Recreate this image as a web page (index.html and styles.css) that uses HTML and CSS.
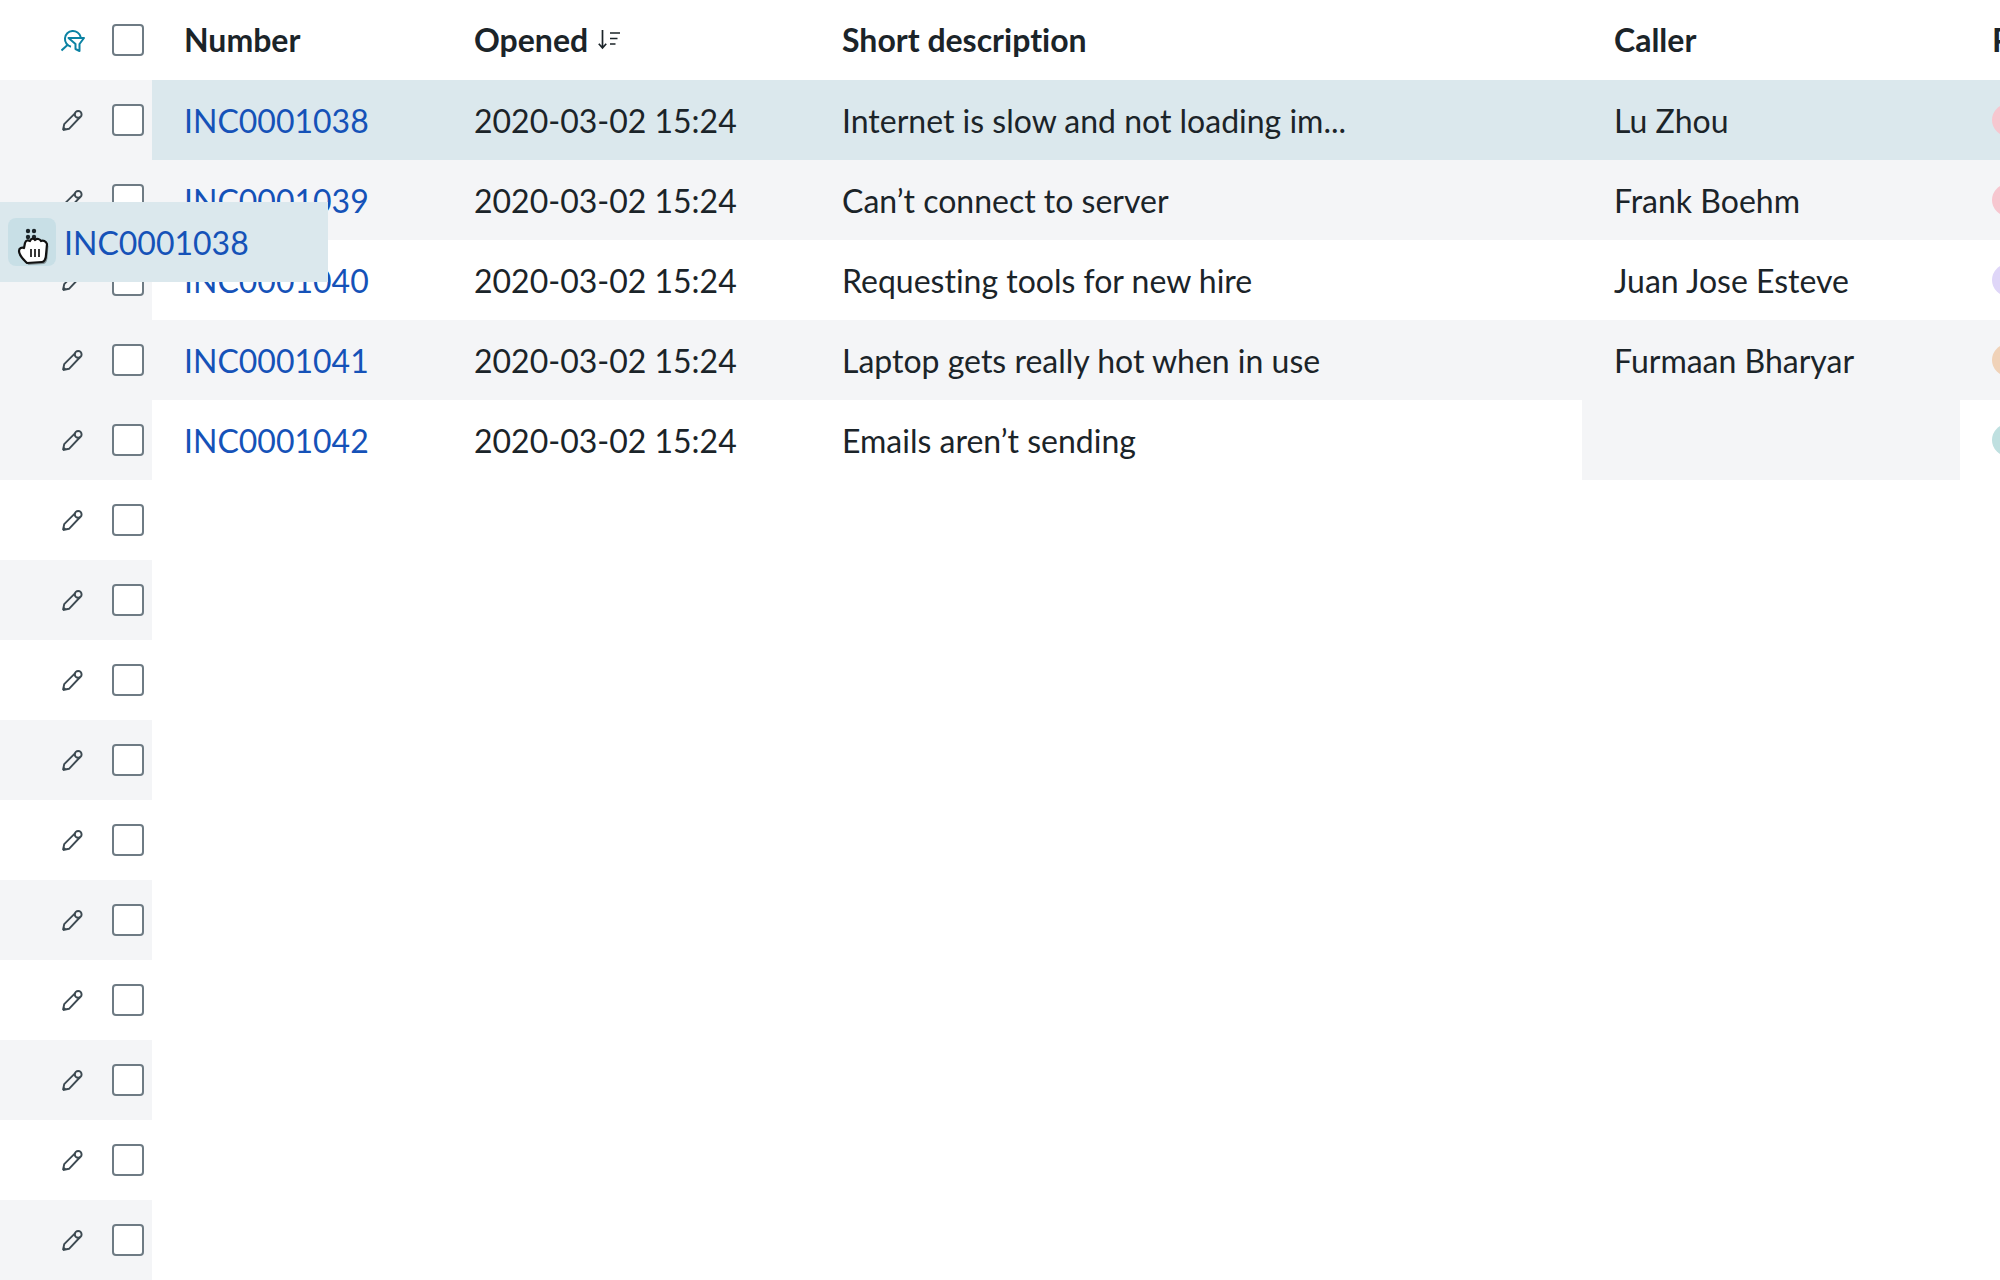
FILE: index.html
```html
<!DOCTYPE html>
<html lang="en">
<head>
    <meta charset="UTF-8">
    <meta name="viewport" content="width=device-width, initial-scale=1.0">
    <title>Incidents</title>
    <link rel="stylesheet" href="styles.css">
</head>
<body>

    <svg class="defs" width="0" height="0">
        <symbol id="pencil" viewBox="0 0 24 24">
            <path d="M2 22l1.200-5.800L14.200 5.200M19.200 9L8 20.800 2 22" fill="none" stroke="currentColor" stroke-width="1.900" stroke-linejoin="round"/>
            <circle cx="17.200" cy="6.400" r="3.400" fill="none" stroke="currentColor" stroke-width="1.900"/>
            <path d="M1.600 22.400l1-4 3 2.900z" fill="currentColor"/>
        </symbol>
    </svg>

    <div class="lista">
        <div class="fila cabecera">
            <div class="gutter">
                <svg class="icono-filtro" width="24" height="24" viewBox="0 0 24 24">
                    <path d="M19.700 9A8 8 0 1 0 10 18.700" fill="none" stroke="currentColor" stroke-width="2"/>
                    <path d="M7 16.500l-6.500 6" fill="none" stroke="currentColor" stroke-width="2"/>
                    <path d="M7.500 10H23l-4.500 6v7l-4-2v-5z" fill="#fff" stroke="currentColor" stroke-width="2" stroke-linejoin="round"/>
                </svg>
                <span class="check"></span>
            </div>
            <div class="celda">Number</div>
            <div class="celda">Opened
                <svg class="icono-orden" width="24" height="20" viewBox="0 0 24 20">
                    <path d="M4.500 0v18M0.800 13.800l3.700 4.200 3.700-4.200" fill="none" stroke="currentColor" stroke-width="1.700"/>
                    <path d="M12 3h10M12 8.500h7.500M12 14h5.500" fill="none" stroke="currentColor" stroke-width="1.700"/>
                </svg>
            </div>
            <div class="celda">Short description</div>
            <div class="celda">Caller</div>
            <div class="celda">Priority</div>
        </div>

        <div class="fila seleccionada">
            <div class="gutter"><svg class="lapiz"><use href="#pencil"/></svg><span class="check"></span></div>
            <div class="celda"><a href="#">INC0001038</a></div>
            <div class="celda">2020-03-02 15:24</div>
            <div class="celda">Internet is slow and not loading im...</div>
            <div class="celda">Lu Zhou</div>
            <div class="celda"><span class="punto rosa"></span></div>
        </div>
        <div class="fila gris">
            <div class="gutter"><svg class="lapiz"><use href="#pencil"/></svg><span class="check"></span></div>
            <div class="celda"><a href="#">INC0001039</a></div>
            <div class="celda">2020-03-02 15:24</div>
            <div class="celda">Can’t connect to server</div>
            <div class="celda">Frank Boehm</div>
            <div class="celda"><span class="punto rosa"></span></div>
        </div>
        <div class="fila">
            <div class="gutter"><svg class="lapiz"><use href="#pencil"/></svg><span class="check"></span></div>
            <div class="celda"><a href="#">INC0001040</a></div>
            <div class="celda">2020-03-02 15:24</div>
            <div class="celda">Requesting tools for new hire</div>
            <div class="celda">Juan Jose Esteve</div>
            <div class="celda"><span class="punto lila"></span></div>
        </div>
        <div class="fila gris">
            <div class="gutter"><svg class="lapiz"><use href="#pencil"/></svg><span class="check"></span></div>
            <div class="celda"><a href="#">INC0001041</a></div>
            <div class="celda">2020-03-02 15:24</div>
            <div class="celda">Laptop gets really hot when in use</div>
            <div class="celda">Furmaan Bharyar</div>
            <div class="celda"><span class="punto naranja"></span></div>
        </div>
        <div class="fila">
            <div class="gutter"><svg class="lapiz"><use href="#pencil"/></svg><span class="check"></span></div>
            <div class="celda"><a href="#">INC0001042</a></div>
            <div class="celda">2020-03-02 15:24</div>
            <div class="celda">Emails aren’t sending</div>
            <div class="celda vacia"></div>
            <div class="celda"><span class="punto turquesa"></span></div>
        </div>

        <div class="fila"><div class="gutter"><svg class="lapiz"><use href="#pencil"/></svg><span class="check"></span></div></div>
        <div class="fila"><div class="gutter"><svg class="lapiz"><use href="#pencil"/></svg><span class="check"></span></div></div>
        <div class="fila"><div class="gutter"><svg class="lapiz"><use href="#pencil"/></svg><span class="check"></span></div></div>
        <div class="fila"><div class="gutter"><svg class="lapiz"><use href="#pencil"/></svg><span class="check"></span></div></div>
        <div class="fila"><div class="gutter"><svg class="lapiz"><use href="#pencil"/></svg><span class="check"></span></div></div>
        <div class="fila"><div class="gutter"><svg class="lapiz"><use href="#pencil"/></svg><span class="check"></span></div></div>
        <div class="fila"><div class="gutter"><svg class="lapiz"><use href="#pencil"/></svg><span class="check"></span></div></div>
        <div class="fila"><div class="gutter"><svg class="lapiz"><use href="#pencil"/></svg><span class="check"></span></div></div>
        <div class="fila"><div class="gutter"><svg class="lapiz"><use href="#pencil"/></svg><span class="check"></span></div></div>
        <div class="fila"><div class="gutter"><svg class="lapiz"><use href="#pencil"/></svg><span class="check"></span></div></div>
    </div>

    <!-- Fila que se esta arrastrando -->
    <div class="arrastre">
        <div class="asa">
            <svg width="48" height="48" viewBox="0 0 48 48">
                <g fill="#1b2429">
                    <circle cx="20" cy="13" r="2.200"/>
                    <circle cx="26" cy="13" r="2.200"/>
                    <circle cx="20" cy="19" r="2.200"/>
                    <circle cx="26" cy="19" r="2.200"/>
                </g>
                <path d="M19 45C16 42 11 38 11 33c0-3 3-4 5-3l1-5c1-3 3-3 5-2 1-3 4-3 5-1 2-2 5-1 6 1 2-1 5 0 6 3l-1 11c0 4-2 7-4 7z" fill="#000" opacity="0.350" transform="translate(1.500 2)"/>
                <path d="M19 45C16 42 11 38 11 33c0-3 3-4 5-3l1-5c1-3 3-3 5-2 1-3 4-3 5-1 2-2 5-1 6 1 2-1 5 0 6 3l-1 11c0 4-2 7-4 7z" fill="#fff" stroke="#111" stroke-width="2.200" stroke-linejoin="round"/>
                <path d="M23 31v8M27 31v8M31 31v8" stroke="#222" stroke-width="1.800" fill="none"/>
            </svg>
        </div>
        <a href="#">INC0001038</a>
    </div>

</body>
</html>
```

FILE: styles.css
```css
body {
    margin: 0;
    height: 1280px;
    overflow: hidden;
    background: #fff;
    font-family: Lato, Arial, sans-serif;
    font-size: 32px;
    font-variant-ligatures: none;
    color: #1b2429;
}

a {
    color: #1552b8;
    text-decoration: none;
}

.defs {
    position: absolute;
}

.lista {
    width: 2000px;
}

.fila {
    display: grid;
    grid-template-columns: 152px 290px 368px 772px 378px 40px;
    height: 80px;
}

.celda {
    display: flex;
    align-items: center;
    padding: 1px 0 0 32px;
    white-space: nowrap;
}

.cabecera .celda {
    padding: 0 0 1px 32px;
    font-weight: 700;
}

.gutter {
    display: flex;
    align-items: center;
    padding-left: 61px;
    gap: 27px;
}

.lista .fila:nth-child(even) .gutter {
    background: #f4f5f7;
}

.gris {
    background: #f4f5f7;
}

.seleccionada {
    background: #dbe8ed;
}

.vacia {
    background: #f4f5f7;
}

.check {
    box-sizing: border-box;
    width: 32px;
    height: 32px;
    background: #fff;
    border: 2px solid #6e7b84;
    border-radius: 4px;
}

.lapiz {
    width: 24px;
    height: 24px;
    color: #3d4a52;
}

.icono-filtro {
    color: #0b82a3;
}

.icono-orden {
    margin-left: 10px;
}

.punto {
    display: block;
    width: 32px;
    height: 32px;
    margin-top: -1px;
    flex: none;
    border-radius: 50%;
}

.rosa { background: #f7c6cf; }
.lila { background: #dfd6f8; }
.naranja { background: #f0d2b8; }
.turquesa { background: #bfe0e0; }

.arrastre {
    position: absolute;
    top: 202px;
    left: 0;
    width: 328px;
    height: 80px;
    box-sizing: border-box;
    padding-left: 8px;
    display: flex;
    align-items: center;
    gap: 8px;
    background: #dbe8ed;
}

.asa {
    width: 48px;
    height: 48px;
    background: #c8dfe6;
    border-radius: 8px;
}
```
